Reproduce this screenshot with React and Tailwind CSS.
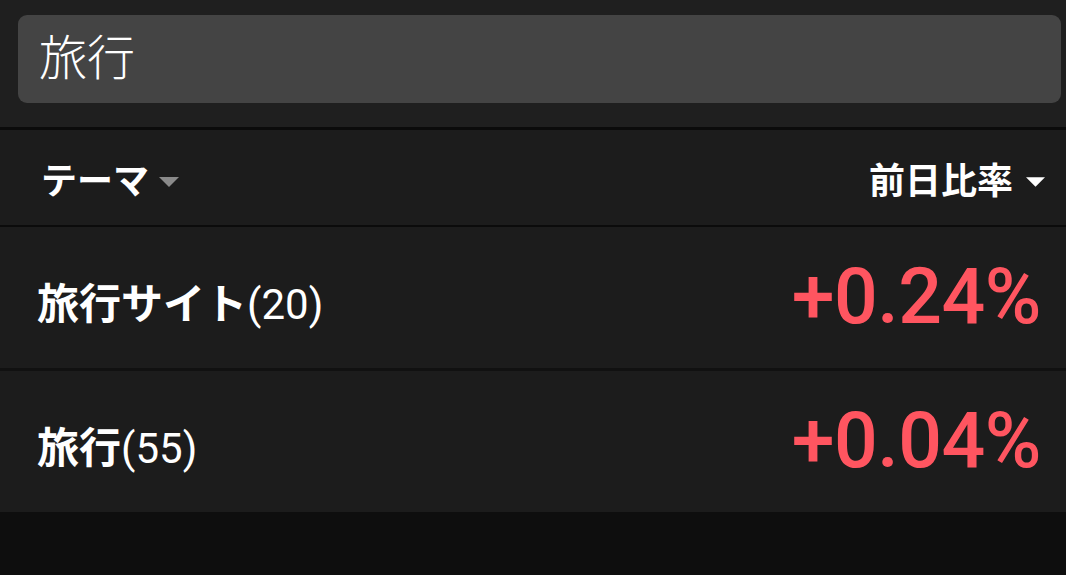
import React from "react";

const rows = [
  { name: "旅行サイト", count: 20, rate: "+0.24%" },
  { name: "旅行", count: 55, rate: "+0.04%" },
];

function Caret({ className }) {
  return (
    <svg viewBox="0 0 20 10" className={className}>
      <path d="M0 0 L20 0 L10 10 Z" fill="currentColor" />
    </svg>
  );
}

export default function App() {
  return (
    <div
      className="w-[1066px] h-[575px] bg-[#0e0e0e] text-white"
      style={{ fontFamily: "Roboto, 'Noto Sans CJK JP', sans-serif" }}
    >
      <div className="h-[127px] bg-[#1f1f1f] pl-[18px] pr-[5px] pt-[15px]">
        <div className="h-[88px] rounded-[9px] bg-[#444444] flex items-center pl-[21px] text-[48px] font-light leading-none">
          旅行
        </div>
      </div>
      <div className="h-[3px] bg-[#0b0b0b]" />

      <div className="h-[95px] bg-[#1c1c1c] flex items-center justify-between pl-[41px] pr-[21px] pt-[8px]">
        <div className="flex items-center gap-[10px] text-[36px] font-bold leading-none">
          テーマ
          <Caret className="w-[20px] h-[10px] text-[#8a8a8a]" />
        </div>
        <div className="flex items-center gap-[13px] text-[36px] font-bold leading-none">
          前日比率
          <Caret className="w-[19px] h-[10px] text-white" />
        </div>
      </div>
      <div className="h-[2px] bg-[#0b0b0b]" />

      {rows.map((r, i) => (
        <div key={r.name}>
          {i > 0 && <div className="h-[3px] bg-[#111111]" />}
          <div className="h-[141px] bg-[#1c1c1c] flex items-center justify-between pl-[37px] pr-[25px]">
            <div className="text-[42px] leading-none pt-[14px]">
              <span className="font-bold">{r.name}</span>
              <span>({r.count})</span>
            </div>
            <div className="text-[77px] font-medium leading-none tracking-[-0.5px] text-[#ff5560]">
              {r.rate}
            </div>
          </div>
        </div>
      ))}
    </div>
  );
}
